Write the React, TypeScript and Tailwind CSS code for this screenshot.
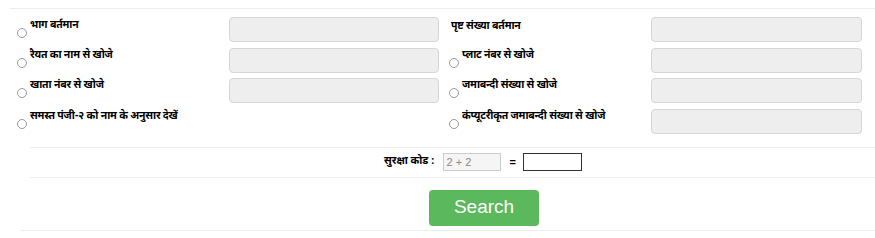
import React from "react";

const hindi = "font-['Noto_Sans_Devanagari','Noto_Sans','Liberation_Sans',sans-serif]";

function Radio() {
  return (
    <span className="mt-[10px] mr-[3px] h-[10px] w-[10px] shrink-0 rounded-full border border-[#9a9a9a] bg-white" />
  );
}

function Label({ text, radio = true }: { text: string; radio?: boolean }) {
  return (
    <label className="flex items-start">
      {radio && <Radio />}
      <span className={`${hindi} text-[10.5px] font-bold leading-[16px] tracking-[-0.2px] text-black`}>{text}</span>
    </label>
  );
}

function Field() {
  return <div className="h-[25px] rounded-[4px] border border-[#d6d6d6] bg-[#eeeeee]" />;
}

export default function App() {
  return (
    <div className="w-[875px] h-[238px] bg-white overflow-hidden">
      <div className="pt-[8px] pl-[10px]">
        <div className="border-t border-[#eeeeee]" />
      </div>
      <div className="ml-[17px] mt-[8px] grid grid-cols-[212px_210px_212px_211px] gap-y-[5.5px]">
        <div className="pt-[1px]">
          <Label text="भाग बर्तमान" />
        </div>
        <Field />
        <div className="pl-[12px] pt-[2px]">
          <Label text="पृष्ट संख्या बर्तमान" radio={false} />
        </div>
        <Field />

        <Label text="रैयत का नाम से खोजे" />
        <Field />
        <div className="pl-[10px]">
          <Label text="प्लाट नंबर से खोजे" />
        </div>
        <Field />

        <Label text="खाता नंबर से खोजे" />
        <Field />
        <div className="pl-[10px]">
          <Label text="जमाबन्दी संख्या से खोजे" />
        </div>
        <Field />

        <Label text="समस्त पंजी-२ को नाम के अनुसार देखें" />
        <div />
        <div className="pl-[10px]">
          <Label text="कंप्यूटरीकृत जमाबन्दी संख्या से खोजे" />
        </div>
        <Field />
      </div>

      <div className="ml-[30px] mt-[13px] border-t border-[#eeeeee]">
        <div className="flex h-[30px] items-center border-b border-[#eeeeee] pl-[354px]">
          <span className={`${hindi} text-[10.5px] font-bold text-black`}>सुरक्षा कोड :</span>
          <div className="ml-[8px] flex h-[18px] w-[58px] items-center border border-[#cccccc] bg-[#f5f5f5] pl-[3px] font-['Liberation_Sans',sans-serif] text-[11px] text-[#888]">
            2 + 2
          </div>
          <span className="ml-[9px] font-['Liberation_Sans',sans-serif] text-[11px] font-bold text-black">=</span>
          <div className="ml-[7px] h-[18px] w-[59px] border border-[#333] bg-white" />
        </div>
      </div>

      <div className="ml-[20px] border-b border-[#eeeeee] pb-[4px] pt-[12px] pl-[409px]">
        <button className="h-[36px] w-[110px] rounded-[4px] bg-[#5cb85c] font-['Liberation_Sans',sans-serif] text-[19px] text-white">
          Search
        </button>
      </div>
    </div>
  );
}
